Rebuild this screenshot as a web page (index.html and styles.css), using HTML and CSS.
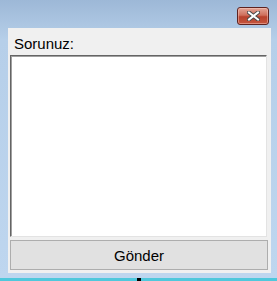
FILE: index.html
```
<!doctype html>
<html lang="tr">
<head>
	<meta charset="UTF-8">
	<title>Soru</title>
	<link rel="stylesheet" href="styles.css">
</head>
<body>
	<div class="window">
		<div class="titlebar">
			<button type="button" class="close-btn" aria-label="Kapat">
				<svg width="13" height="10" viewBox="0 0 13 10">
					<path d="M2 1.5 L11 8.5 M11 1.5 L2 8.5" stroke="#4a4a4a" stroke-width="4" stroke-linecap="square"/>
					<path d="M2 1.5 L11 8.5 M11 1.5 L2 8.5" stroke="#fff" stroke-width="2" stroke-linecap="square"/>
				</svg>
			</button>
		</div>
		<div class="client">
			<label for="soru" class="soru-label">Sorunuz:</label>
			<textarea id="soru" class="soru-text"></textarea>
			<button type="button" class="send-btn">Gönder</button>
		</div>
	</div>
	<div class="taskbar"><span class="mark"></span></div>
</body>
</html>
```

FILE: styles.css
```
*{
	margin:0;
	padding:0;
	box-sizing:border-box;
}
body{
	width:277px;
	height:281px;
	overflow:hidden;
	font-family:"Liberation Sans", Arial, sans-serif;
	background:#bcd4ee;
}
.window{
	height:278px;
	display:flex;
	flex-direction:column;
	background:linear-gradient(#9db8d7, #b6cfe9 40px, #bed6ef);
}
.titlebar{
	height:28px;
	display:flex;
	justify-content:flex-end;
	align-items:flex-start;
	padding:7px 8px 0 0;
}
.close-btn{
	width:32px;
	height:18px;
	border:1px solid #5e2320;
	border-radius:3px;
	background:linear-gradient(#e3a597, #cf6f5c 45%, #b8412c 55%, #c4563f);
	box-shadow:inset 0 0 0 1px rgba(255,210,200,0.45);
	display:flex;
	align-items:center;
	justify-content:center;
}
.client{
	flex:1;
	margin:0 6px 5px 8px;
	background:#f0f0f0;
	display:flex;
	flex-direction:column;
	padding:0 3px 3px 2px;
}
.soru-label{
	height:27px;
	padding:7px 0 0 4px;
	font-size:15px;
	line-height:17px;
	color:#000;
}
.soru-text{
	height:182px;
	margin-right:1px;
	border:1px solid;
	border-color:#646464 #e3e3e3 #e3e3e3 #646464;
	box-shadow:inset 1px 1px 0 #a0a0a0;
	background:#fff;
	resize:none;
	outline:none;
}
.send-btn{
	margin-top:3px;
	height:30px;
	border:1px solid #adadad;
	background:#e1e1e1;
	font-family:"Liberation Sans", Arial, sans-serif;
	font-size:15px;
	color:#000;
}
.taskbar{
	height:3px;
	background:#4fc8dc;
	position:relative;
}
.taskbar .mark{
	position:absolute;
	left:137px;
	top:0;
	width:4px;
	height:3px;
	background:#000;
}
```
